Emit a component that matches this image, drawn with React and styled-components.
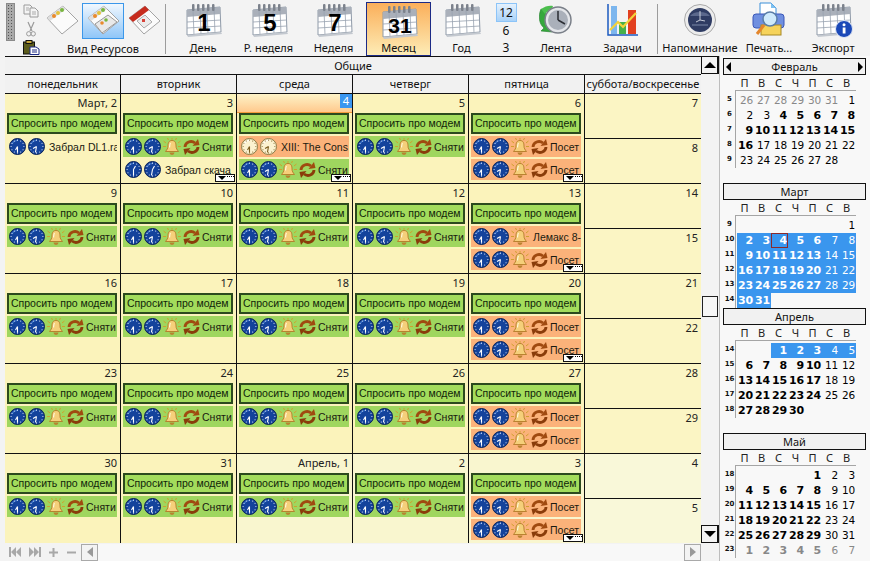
import React from 'react';
import styled, { createGlobalStyle } from 'styled-components';

const FONT = '"Noto Sans", "DejaVu Sans", sans-serif';
const DIGITS = '"DejaVu Sans", Verdana, sans-serif';
const EVENT_FONT = '"Liberation Sans", Arial, sans-serif';

const GlobalStyle = createGlobalStyle`
  html, body { margin: 0; padding: 0; background: #f3f3f3; }
  body { font-family: ${FONT}; color: #111; }
`;

const Page = styled.div`
  width: 870px;
  height: 561px;
  overflow: hidden;
  display: flex;
  flex-direction: column;
  background: #f3f3f3;
`;

/* toolbar */
const Toolbar = styled.div`
  height: 56px;
  display: flex;
  align-items: flex-start;
  padding-left: 6px;
  flex: none;
`;
const Handle = styled.div`
  width: 9px;
  height: 38px;
  margin-top: 3px;
  background: #a9a9a9 radial-gradient(#555 40%, transparent 45%) 0 6px / 3px 3px;
  border: 1px solid #8a8a8a;
  box-sizing: border-box;
`;
const SmallTools = styled.div`
  width: 20px;
  margin: 4px 2px 0 6px;
  display: flex;
  flex-direction: column;
  align-items: center;
  gap: 3px;
`;
const ResourceGroup = styled.div`
  width: 120px;
  height: 56px;
  display: flex;
  flex-direction: column;
  align-items: center;
`;
const ResourceRow = styled.div`
  display: flex;
  align-items: center;
  height: 38px;
  margin-top: 2px;
  gap: 2px;
`;
const ResourceBtn = styled.div`
  width: ${(p) => (p.$active ? 42 : 36)}px;
  height: 36px;
  box-sizing: border-box;
  display: flex;
  align-items: center;
  justify-content: center;
  border: ${(p) => (p.$active ? '1px solid #3b97ea' : 'none')};
  background: ${(p) => (p.$active ? 'linear-gradient(#f0f7fe, #8fc6f8)' : 'none')};
`;
const Label = styled.div`
  font-size: 11px;
  line-height: 15px;
  white-space: nowrap;
  text-align: center;
`;
const GroupLabel = styled(Label)`
  margin-top: 1px;
`;
const Separator = styled.div`
  width: 1px;
  height: 50px;
  margin: 4px ${(p) => p.$right || 4}px 0 ${(p) => p.$left || 2}px;
  background: #9c9c9c;
`;
const ToolBtn = styled.div`
  width: ${(p) => p.$w}px;
  height: ${(p) => (p.$active ? 54 : 56)}px;
  margin-top: ${(p) => (p.$active ? 2 : 0)}px;
  box-sizing: border-box;
  display: flex;
  flex-direction: column;
  align-items: center;
  flex: none;
  border: ${(p) => (p.$active ? '1px solid #1c2a86' : 'none')};
  background: ${(p) => (p.$active ? 'linear-gradient(#fbaf5a, #fdecb6)' : 'none')};
`;
const ToolIcon = styled.div`
  height: ${(p) => (p.$active ? 37 : 40)}px;
  display: flex;
  align-items: center;
  justify-content: center;
`;
const Scale = styled.div`
  width: 28px;
  flex: none;
  display: flex;
  flex-direction: column;
  align-items: center;
  font-size: 12px;
`;
const ScaleTop = styled.div`
  width: 21px;
  height: 19px;
  margin-top: 3px;
  display: flex;
  align-items: center;
  justify-content: center;
  border: 1px solid #8cc4f8;
  background: linear-gradient(#e4f1fd, #a9d2f8);
  box-sizing: border-box;
`;
const ScaleNum = styled.div`
  line-height: 17px;
`;

/* main area */
const Body = styled.div`
  flex: 1;
  min-height: 0;
  display: flex;
`;
const LeftArea = styled.div`
  width: 720px;
  flex: none;
  padding-left: 5px;
  box-sizing: border-box;
  border-right: 1px solid #bdbdbd;
  display: flex;
  flex-direction: column;
`;
const CalendarRow = styled.div`
  display: flex;
  height: 487px;
`;
const Calendar = styled.div`
  width: 696px;
  flex: none;
  display: flex;
  flex-direction: column;
  border-top: 1px solid #111;
  box-sizing: border-box;
`;
const ResourceHead = styled.div`
  height: 18px;
  font-size: 11px;
  line-height: 17px;
  text-align: center;
  border-bottom: 1px solid #111;
  box-sizing: border-box;
  background: #f1f1f1;
`;
const Heads = styled.div`
  display: grid;
  grid-template-columns: repeat(6, 116px);
  height: 19px;
  border-bottom: 1px solid #111;
  box-sizing: border-box;
  background: #f1f1f1;
`;
const Head = styled.div`
  font-size: 11px;
  line-height: 18px;
  text-align: center;
  white-space: nowrap;
  border-right: ${(p) => (p.$last ? 'none' : '1px solid #111')};
`;
const WeekRow = styled.div`
  display: grid;
  grid-template-columns: repeat(6, 116px);
  height: 90px;
  flex: none;
  border-bottom: 1px solid #111;
  box-sizing: border-box;
  &:last-child { border-bottom: none; height: 89px; }
`;
const Cell = styled.div`
  position: relative;
  overflow: hidden;
  padding: 0 3px 0 2px;
  border-right: 1px solid #111;
  background: ${(p) => (p.$next ? '#f9f6cf' : '#fbf3bb')};
`;
const DayLabel = styled.div`
  height: 19px;
  margin: 0 -3px 0 -2px;
  padding-right: 3px;
  box-sizing: border-box;
  font-size: 11px;
  line-height: 18px;
  text-align: right;
  color: #222;
  ${(p) => p.$today && `
    padding-right: 0;
    display: flex;
    justify-content: flex-end;
    background: linear-gradient(#fdf3c8, #ffc98d);
    border-bottom: 1px solid #f59b3c;
  `}
`;
const TodayNum = styled.span`
  width: 12px;
  height: 14px;
  line-height: 14px;
  text-align: center;
  color: #fff;
  background: #3a96f0;
`;
const Chip = styled.div`
  height: 21px;
  box-sizing: border-box;
  border: 2px solid #2c4a1e;
  background: #a3dc5c;
  font-family: ${EVENT_FONT};
  font-size: 10.5px;
  line-height: 17px;
  padding-left: 2px;
  white-space: nowrap;
  overflow: hidden;
  color: #10240a;
`;
const EventRow = styled.div`
  height: 21px;
  margin-top: 2px;
  display: flex;
  align-items: center;
  gap: 2px;
  padding-left: 2px;
  font-family: ${EVENT_FONT};
  font-size: 10.5px;
  white-space: nowrap;
  overflow: hidden;
  background: ${(p) => ({ green: '#9fd65f', orange: '#fbb27a', none: 'transparent' }[p.$kind])};
`;
const EventText = styled.span`
  margin-left: ${(p) => (p.$plain ? 2 : 0)}px;
  color: #1a1a10;
`;
const MoreBadge = styled.div`
  position: absolute;
  right: 1px;
  bottom: 1px;
  width: 20px;
  height: 8px;
  box-sizing: border-box;
  border: 1px solid #111;
  background: #fff;
  display: flex;
  align-items: flex-start;
  gap: 1px;
  padding: 1px 0 0 2px;
`;
const MoreArrow = styled.span`
  width: 0;
  height: 0;
  border-left: 4px solid transparent;
  border-right: 4px solid transparent;
  border-top: 4px solid #000;
`;
const MoreDots = styled.span`
  width: 7px;
  height: 1px;
  background: repeating-linear-gradient(90deg, #000 0 1px, transparent 1px 2px);
`;
const WeekendCol = styled.div`
  display: flex;
  flex-direction: column;
`;
const WeekendCell = styled.div`
  flex: 1;
  padding-right: 3px;
  font-size: 11px;
  line-height: 18px;
  text-align: right;
  color: #222;
  background: ${(p) => (p.$next ? '#f9f8d9' : '#fbf5c4')};
  & + & { border-top: 1px solid #111; }
`;

/* vertical + horizontal scrollbars */
const VScroll = styled.div`
  width: 18px;
  display: flex;
  flex-direction: column;
  background: #f3f3f3;
`;
const ScrollEnd = styled.div`
  height: 18px;
  flex: none;
  box-sizing: border-box;
  border: 1px solid #111;
  border-width: 1px 2px 1px 1px;
  display: flex;
  align-items: center;
  justify-content: center;
`;
const Tri = styled.span`
  width: 0;
  height: 0;
  border-left: 6px solid transparent;
  border-right: 6px solid transparent;
  ${(p) => (p.$down ? 'border-top: 6px solid #000;' : 'border-bottom: 6px solid #000;')}
`;
const TrackGap = styled.div`
  flex: ${(p) => p.$grow};
`;
const Thumb = styled.div`
  height: 21px;
  flex: none;
  margin: 0 1px;
  box-sizing: border-box;
  border: 1px solid #222;
  background: #f6f6f6;
`;
const BottomBar = styled.div`
  height: 18px;
  width: 696px;
  display: flex;
  align-items: center;
  color: #a8a8a8;
`;
const NavIcon = styled.div`
  width: ${(p) => p.$w}px;
  flex: none;
  display: flex;
  align-items: center;
  justify-content: center;
`;
const HBtn = styled.div`
  width: 17px;
  height: 17px;
  flex: none;
  box-sizing: border-box;
  border: 1px solid #a9a9a9;
  display: flex;
  align-items: center;
  justify-content: center;
`;
const HTrack = styled.div`
  flex: 1;
  height: 17px;
  background: #f8f8f8;
`;
const HTri = styled.span`
  width: 0;
  height: 0;
  border-top: 5px solid transparent;
  border-bottom: 5px solid transparent;
  ${(p) => (p.$right ? 'border-left: 6px solid #999;' : 'border-right: 6px solid #999;')}
`;

/* sidebar */
const Sidebar = styled.div`
  flex: 1;
  background: #f8f8f8;
  padding: 2px 4px 0 3px;
  overflow: hidden;
`;
const Month = styled.div`
  height: 125px;
`;
const MonthTitle = styled.div`
  height: 17px;
  box-sizing: border-box;
  border: 1px solid #111;
  background: #f1f1f1;
  display: flex;
  align-items: center;
  justify-content: space-between;
  padding: 0 2px;
  font-size: 11px;
`;
const MonthName = styled.span`
  flex: 1;
  text-align: center;
`;
const MTri = styled.span`
  width: 0;
  height: 0;
  border-top: 5px solid transparent;
  border-bottom: 5px solid transparent;
  ${(p) => (p.$right ? 'border-left: 5px solid #000;' : 'border-right: 5px solid #000;')}
`;
const WeekDays = styled.div`
  display: grid;
  grid-template-columns: repeat(7, 17px);
  margin-left: 13px;
  height: 15px;
  font-size: 11px;
  line-height: 15px;
  text-align: center;
  color: #222;
`;
const MiniBody = styled.div`
  display: flex;
`;
const WeekNums = styled.div`
  width: 12px;
  flex: none;
  padding-top: 2px;
  border-right: 1px solid #a5a5a5;
`;
const WeekNum = styled.div`
  height: 15px;
  font-family: ${DIGITS};
  font-size: 7px;
  font-weight: bold;
  line-height: 15px;
  text-align: center;
  padding-left: 1px;
`;
const MiniGrid = styled.div`
  display: grid;
  grid-template-columns: repeat(7, 17px);
  grid-auto-rows: 15px;
  padding-top: 2px;
  padding-left: 1px;
  border-top: 1px solid #a5a5a5;
  width: 119px;
`;
const MiniDay = styled.div`
  box-sizing: border-box;
  font-family: ${DIGITS};
  font-size: ${(p) => (p.$bold ? 11 : 10.5)}px;
  font-weight: ${(p) => (p.$bold ? 'bold' : 'normal')};
  line-height: 15px;
  text-align: right;
  padding-right: 1px;
  letter-spacing: -0.2px;
  color: ${(p) => (p.$sel ? '#fff' : p.$gray ? '#888' : '#000')};
  background: ${(p) => (p.$sel ? '#3a96ee' : 'transparent')};
  ${(p) => p.$today && 'outline: 1px solid #8a2b2b; outline-offset: -1px;'}
`;

/* icons */
const Clock = ({ white, a = 180, b = 210 }) => {
  const hand = (deg, len) => {
    const r = (deg * Math.PI) / 180;
    return [8.5 + Math.sin(r) * len, 8.5 - Math.cos(r) * len];
  };
  const [x1, y1] = hand(a, 6);
  const [x2, y2] = hand(b, 4);
  const face = white ? '#fbf2d0' : '#14439c';
  const rim = white ? '#8b7a45' : '#0a2258';
  const ink = white ? '#7a5b1c' : '#fff';
  const dots = [0, 30, 60, 90, 120, 150, 180, 210, 240, 270, 300, 330];
  return (
    <svg width="17" height="17" viewBox="0 0 17 17" style={{ flex: 'none' }}>
      <circle cx="8.5" cy="8.5" r="8" fill={face} stroke={rim} />
      <path d="M3 6a6.5 6.5 0 0 1 6-3.500" fill="none" stroke={white ? '#fff' : '#3f78d0'} strokeWidth="1.200" />
      {dots.map((d) => {
        const [x, y] = hand(d, 6.4);
        return <circle key={d} cx={x} cy={y} r="0.55" fill={ink} />;
      })}
      <path d={`M8.5 8.5L${x1} ${y1}M8.5 8.5L${x2} ${y2}`} stroke={ink} strokeWidth="1.100" />
    </svg>
  );
};

const Bell = () => (
  <svg width="18" height="18" viewBox="0 0 18 18" style={{ flex: 'none' }}>
    <path d="M9 2.500c-3.500 0-4 3-4 5.500S4 11.500 2.500 13.500h13C14 11.500 13 10.500 13 8S12.500 2.500 9 2.500z" fill="#f5cf7a" stroke="#b27a28" strokeWidth="0.900" />
    <path d="M6.500 14.500h5a2.500 2.500 0 0 1-5 0z" fill="#b9822f" />
    <path d="M0.500 3l2.500 2M17.500 3L15 5M0 8.500h3M15 8.500h3M9 0v1.800M4.500 0l1 2M13.500 0l-1 2" stroke="#cfa02e" strokeWidth="1" />
    <path d="M7.500 5c-.8 1-.8 3-1 4.500" fill="none" stroke="#fff8dc" strokeWidth="1.200" />
  </svg>
);

const Recur = () => (
  <svg width="17" height="16" viewBox="0 0 17 16" style={{ flex: 'none' }}>
    <path d="M2 8a6 5.500 0 0 1 10-4" fill="none" stroke="#a04a10" strokeWidth="2.800" />
    <path d="M9.500 7l7-1L15 0z" fill="#a04a10" />
    <path d="M15 8a6 5.500 0 0 1-10 4" fill="none" stroke="#8a3c0a" strokeWidth="2.800" />
    <path d="M7.500 9l-7 1L2 16z" fill="#8a3c0a" />
  </svg>
);

const CalendarIcon = ({ num, info }) => (
  <svg width="44" height="38" viewBox="0 0 44 38">
    <path d="M6 9L39 6l1 25-34 3z" fill="#fff" stroke="#8f9aa8" />
    <path d="M6 9L39 6l.4 7L6 16z" fill="#aab0ba" />
    <path d="M6 21l34-2M6 27l34-2M12 9l1 25M19 8l1 25M26 7.500l1 25M33 7l1 25" stroke="#98a2b0" strokeWidth="0.800" />
    {[11, 16, 21, 26, 31].map((x) => (
      <rect key={x} x={x} y="3" width="2.500" height="7" rx="1" fill="#7c828c" />
    ))}
    <path d="M6 34l34-3 1 2-34 3z" fill="#c3c8cf" />
    {num && (
      <text x="23" y="30" textAnchor="middle" fontFamily='"Liberation Sans", sans-serif' fontWeight="bold" fontSize={num.length > 1 ? 21 : 24} fill="#000">
        {num}
      </text>
    )}
    {info && (
      <g>
        <circle cx="33" cy="28" r="8.500" fill="#1b49b8" stroke="#dfe6f5" />
        <rect x="31.700" y="26.500" width="2.800" height="6" fill="#fff" />
        <circle cx="33" cy="23.800" r="1.500" fill="#fff" />
      </g>
    )}
  </svg>
);

const SheetIcon = ({ red, blue }) => (
  <svg width="36" height="34" viewBox="0 0 36 34">
    <path d="M3 14L19 2l15 15-16 13z" fill="#fbfbfb" stroke="#a3a3a3" />
    {red ? (
      <>
        <path d="M3 14L19 2l4 4L7 18z" fill="#c62b1d" />
        <path d="M11 17l8-6 7 7-8 6z" fill="#ececec" stroke="#aaa" />
        <rect x="16" y="15" width="3" height="3" fill="#d8433a" />
      </>
    ) : (
      <>
        <path d="M3 14L19 2l3 3L6 17z" fill="#dedede" />
        <circle cx="10" cy="12" r="2" fill="#e98a2c" />
        <circle cx="14" cy="9" r="2" fill="#e2c23c" />
        <circle cx="18" cy="6" r="2" fill="#79b640" />
        {blue && (
          <>
            <path d="M10 20l13-9 9 7-15 11z" fill="#e9e9e9" stroke="#999" />
            <circle cx="17" cy="19" r="1.800" fill="#e98a2c" />
            <circle cx="21" cy="16" r="1.800" fill="#79b640" />
          </>
        )}
      </>
    )}
  </svg>
);

const CopyIcon = () => (
  <svg width="16" height="14" viewBox="0 0 16 14">
    <path d="M1 1h6l2 2v7H1z" fill="#f4f4f4" stroke="#9a9a9a" />
    <path d="M7 4h5l3 3v6H7z" fill="#f4f4f4" stroke="#9a9a9a" />
    <path d="M3 4h3M3 6h3M9 8h4M9 10h4" stroke="#aaa" />
  </svg>
);
const CutIcon = () => (
  <svg width="10" height="16" viewBox="0 0 10 16">
    <path d="M2 1l4 9M8 1L4 10" stroke="#9a9a9a" strokeWidth="1.200" />
    <circle cx="2.800" cy="12.800" r="2.200" fill="none" stroke="#9a9a9a" />
    <circle cx="7.200" cy="12.800" r="2.200" fill="none" stroke="#9a9a9a" />
  </svg>
);
const PasteIcon = () => (
  <svg width="17" height="15" viewBox="0 0 17 15">
    <rect x="0.500" y="2" width="11" height="12" fill="#5c5c1c" stroke="#111" />
    <rect x="3" y="0.500" width="6" height="3" fill="#c7a73b" stroke="#111" />
    <path d="M7 7h6l3 2v5.500H7z" fill="#fff" stroke="#1c2a86" />
    <path d="M9 10h5M9 12h5" stroke="#1c2a86" />
  </svg>
);
const FeedIcon = () => (
  <svg width="34" height="34" viewBox="0 0 34 34">
    <path d="M2 6c-3 7-2 15 3 19l-3 3 11 1-1-11-3 3c-3-3-3-8-2-12z" fill="#35a83c" stroke="#1f7c28" strokeWidth="0.600" />
    <path d="M2 6c4-3 9-4 12-3l-2 6c-3-.5-5 0-6 2z" fill="#4cbf4e" />
    <circle cx="19" cy="17" r="13" fill="#e4e6ea" stroke="#7b8089" strokeWidth="1.500" />
    <circle cx="19" cy="17" r="10" fill="#aab0ba" />
    <path d="M19 17V8M19 17l7 4" stroke="#2a2d33" strokeWidth="1.500" />
  </svg>
);
const TasksIcon = () => (
  <svg width="32" height="34" viewBox="0 0 32 34">
    <path d="M1 1v31h30" fill="none" stroke="#1c5bc0" strokeWidth="1.500" />
    <rect x="4" y="3" width="6" height="28" fill="#7cb6ee" />
    <rect x="12" y="19" width="7" height="12" fill="#46b04a" />
    <rect x="21" y="7" width="8" height="24" fill="#e2401f" />
    <path d="M3 27l8-8 5 5 13-14" fill="none" stroke="#f2d23a" strokeWidth="2.200" />
  </svg>
);
const ReminderIcon = () => (
  <svg width="34" height="34" viewBox="0 0 34 34">
    <circle cx="17" cy="17" r="15.500" fill="#ececec" stroke="#a9a9a9" />
    <circle cx="17" cy="17" r="12" fill="#2f3c63" />
    <path d="M7 13a11 7 0 0 1 20 0z" fill="#5b688c" />
    <path d="M17 17V8M17 17l-4 2M17 17l5 1" stroke="#d5d9e3" strokeWidth="0.900" />
    <path d="M9 22h16" stroke="#8591b0" strokeWidth="0.900" />
  </svg>
);
const PrintIcon = () => (
  <svg width="34" height="36" viewBox="0 0 34 36">
    <path d="M8 1h11l5 5v10H8z" fill="#fff" stroke="#3b8fd8" />
    <path d="M19 1v5h5z" fill="#7cc0f0" />
    <rect x="1" y="12" width="31" height="14" rx="3" fill="#6f8fe0" stroke="#3a57b8" />
    <rect x="9" y="23" width="20" height="10" fill="#f6d35b" stroke="#a78825" />
    <circle cx="18" cy="17" r="7" fill="#cfeafb" stroke="#5a7ea8" strokeWidth="1.500" />
    <path d="M12 23L5 32" stroke="#e4862b" strokeWidth="3" />
  </svg>
);

const DOW = ['понедельник', 'вторник', 'среда', 'четверг', 'пятница', 'суббота/воскресенье'];

const green = { kind: 'green', text: 'Сняти', bell: true, recur: true };
const orange = { kind: 'orange', text: 'Посет', bell: true, recur: true };
const fri = (more) => ({ events: [orange, orange], more });

const WEEKS = [
  {
    days: [
      { label: 'Март, 2', events: [{ kind: 'none', text: 'Забрал DL1.ra' }] },
      { label: '3', events: [green, { kind: 'none', text: 'Забрал скача', b: 30 }], more: true },
      {
        label: '4',
        today: true,
        events: [{ kind: 'orange', text: 'XIII: The Cons', white: true }, green],
        more: true,
      },
      { label: '5', events: [green] },
      { label: '6', ...fri(true) },
    ],
    weekend: ['7', '8'],
  },
  {
    days: [
      { label: '9', events: [green] },
      { label: '10', events: [green] },
      { label: '11', events: [green] },
      { label: '12', events: [green] },
      { label: '13', events: [{ kind: 'orange', text: 'Лемакс 8-', bell: true }, orange], more: true },
    ],
    weekend: ['14', '15'],
  },
  {
    days: [
      { label: '16', events: [green] },
      { label: '17', events: [green] },
      { label: '18', events: [green] },
      { label: '19', events: [green] },
      { label: '20', ...fri(true) },
    ],
    weekend: ['21', '22'],
  },
  {
    days: [
      { label: '23', events: [green] },
      { label: '24', events: [green] },
      { label: '25', events: [green] },
      { label: '26', events: [green] },
      { label: '27', ...fri(false) },
    ],
    weekend: ['28', '29'],
  },
  {
    days: [
      { label: '30', events: [green] },
      { label: '31', events: [green] },
      { label: 'Апрель, 1', next: true, events: [green] },
      { label: '2', next: true, events: [green] },
      { label: '3', next: true, ...fri(true) },
    ],
    weekend: ['4', '5'],
    next: true,
  },
];

// token: number + flags: b bold, g gray, s selected, t today box; "." is an empty cell
const MONTHS = [
  {
    name: 'Февраль',
    arrows: true,
    nums: [5, 6, 7, 8, 9],
    days: '26g 27g 28g 29g 30g 31g 1 2 3 4b 5b 6b 7b 8b 9b 10b 11b 12b 13b 14b 15b 16b 17 18 19 20 21 22 23 24 25 26 27 28',
  },
  {
    name: 'Март',
    nums: [9, 10, 11, 12, 13, 14],
    days: '. . . . . . 1 2bs 3bs 4bst 5bs 6bs 7s 8s 9bs 10bs 11bs 12bs 13bs 14s 15s 16bs 17bs 18bs 19bs 20bs 21s 22s 23bs 24bs 25bs 26bs 27bs 28s 29s 30bs 31bs',
  },
  {
    name: 'Апрель',
    nums: [14, 15, 16, 17, 18],
    days: '. . 1bs 2bs 3bs 4s 5s 6b 7b 8b 9b 10b 11 12 13b 14b 15b 16b 17b 18 19 20b 21b 22b 23b 24b 25 26 27b 28b 29b 30b',
  },
  {
    name: 'Май',
    nums: [18, 19, 20, 21, 22, 23],
    days: '. . . . 1b 2 3 4b 5b 6b 7b 8b 9 10 11b 12b 13b 14b 15b 16 17 18b 19b 20b 21b 22b 23 24 25b 26b 27b 28b 29b 30 31 1bg 2bg 3bg 4bg 5bg 6g 7g',
  },
];

const parseDay = (tok) => {
  const m = tok.match(/^(\d*|\.)([bgst]*)$/);
  const flags = m[2];
  return {
    text: m[1] === '.' ? '' : m[1],
    bold: flags.includes('b'),
    gray: flags.includes('g'),
    sel: flags.includes('s'),
    today: flags.includes('t'),
  };
};

const Event = ({ ev }) => (
  <EventRow $kind={ev.kind}>
    <Clock white={ev.white} a={ev.a} b={ev.b} />
    <Clock white={ev.white} a={ev.a ?? 190} b={ev.b ?? 240} />
    {ev.bell && <Bell />}
    {ev.recur && <Recur />}
    <EventText $plain={!ev.recur}>{ev.text}</EventText>
  </EventRow>
);

const Day = ({ day }) => (
  <Cell $next={day.next}>
    <DayLabel $today={day.today}>
      {day.today ? <TodayNum>{day.label}</TodayNum> : day.label}
    </DayLabel>
    <Chip>Спросить про модем</Chip>
    {day.events.map((ev, i) => (
      <Event key={i} ev={ev} />
    ))}
    {day.more && (
      <MoreBadge>
        <MoreArrow />
        <MoreDots />
      </MoreBadge>
    )}
  </Cell>
);

const MiniMonth = ({ month }) => (
  <Month>
    <MonthTitle>
      {month.arrows && <MTri />}
      <MonthName>{month.name}</MonthName>
      {month.arrows && <MTri $right />}
    </MonthTitle>
    <WeekDays>
      {['П', 'В', 'С', 'Ч', 'П', 'С', 'В'].map((d, i) => (
        <div key={i}>{d}</div>
      ))}
    </WeekDays>
    <MiniBody>
      <WeekNums>
        {month.nums.map((n) => (
          <WeekNum key={n}>{n}</WeekNum>
        ))}
      </WeekNums>
      <MiniGrid>
        {month.days.split(' ').map((tok, i) => {
          const d = parseDay(tok);
          return (
            <MiniDay key={i} $bold={d.bold} $gray={d.gray} $sel={d.sel} $today={d.today}>
              {d.text}
            </MiniDay>
          );
        })}
      </MiniGrid>
    </MiniBody>
  </Month>
);

const Tool = ({ w, label, active, children }) => (
  <ToolBtn $w={w} $active={active}>
    <ToolIcon $active={active}>{children}</ToolIcon>
    <Label>{label}</Label>
  </ToolBtn>
);

const App = () => (
  <Page>
    <GlobalStyle />
    <Toolbar>
      <Handle />
      <SmallTools>
        <CopyIcon />
        <CutIcon />
        <PasteIcon />
      </SmallTools>
      <ResourceGroup>
        <ResourceRow>
          <ResourceBtn>
            <SheetIcon />
          </ResourceBtn>
          <ResourceBtn $active>
            <SheetIcon blue />
          </ResourceBtn>
          <ResourceBtn>
            <SheetIcon red />
          </ResourceBtn>
        </ResourceRow>
        <GroupLabel>Вид Ресурсов</GroupLabel>
      </ResourceGroup>
      <Separator />
      <Tool w={66} label="День"><CalendarIcon num="1" /></Tool>
      <Tool w={65} label="Р. неделя"><CalendarIcon num="5" /></Tool>
      <Tool w={65} label="Неделя"><CalendarIcon num="7" /></Tool>
      <Tool w={65} label="Месяц" active><CalendarIcon num="31" /></Tool>
      <Tool w={61} label="Год"><CalendarIcon /></Tool>
      <Scale>
        <ScaleTop>12</ScaleTop>
        <ScaleNum>6</ScaleNum>
        <ScaleNum>3</ScaleNum>
      </Scale>
      <Tool w={72} label="Лента"><FeedIcon /></Tool>
      <Tool w={61} label="Задачи"><TasksIcon /></Tool>
      <Separator $left={4} $right={4} />
      <Tool w={76} label="Напоминание"><ReminderIcon /></Tool>
      <Tool w={62} label="Печать..."><PrintIcon /></Tool>
      <Tool w={66} label="Экспорт"><CalendarIcon info /></Tool>
    </Toolbar>
    <Body>
      <LeftArea>
        <CalendarRow>
          <Calendar>
            <ResourceHead>Общие</ResourceHead>
            <Heads>
              {DOW.map((d, i) => (
                <Head key={d} $last={i === 5}>{d}</Head>
              ))}
            </Heads>
            {WEEKS.map((week, i) => (
              <WeekRow key={i}>
                {week.days.map((day) => (
                  <Day key={day.label} day={day} />
                ))}
                <WeekendCol>
                  {week.weekend.map((n) => (
                    <WeekendCell key={n} $next={week.next}>{n}</WeekendCell>
                  ))}
                </WeekendCol>
              </WeekRow>
            ))}
          </Calendar>
          <VScroll>
            <ScrollEnd><Tri /></ScrollEnd>
            <TrackGap $grow={223} />
            <Thumb />
            <TrackGap $grow={208} />
            <ScrollEnd><Tri $down /></ScrollEnd>
          </VScroll>
        </CalendarRow>
        <BottomBar>
          <NavIcon $w={20}>
            <svg width="12" height="10" viewBox="0 0 12 10"><path d="M0 0h2v10H0zM7 0v10L2 5zM12 0v10L7 5z" fill="currentColor" /></svg>
          </NavIcon>
          <NavIcon $w={19}>
            <svg width="12" height="10" viewBox="0 0 12 10"><path d="M10 0h2v10h-2zM5 0v10l5-5zM0 0v10l5-5z" fill="currentColor" /></svg>
          </NavIcon>
          <NavIcon $w={18}>
            <svg width="9" height="9" viewBox="0 0 9 9"><path d="M3.500 0h2v3.500H9v2H5.500V9h-2V5.500H0v-2h3.500z" fill="currentColor" /></svg>
          </NavIcon>
          <NavIcon $w={19}>
            <svg width="9" height="9" viewBox="0 0 9 9"><path d="M0 3.500h9v2H0z" fill="currentColor" /></svg>
          </NavIcon>
          <HBtn><HTri /></HBtn>
          <HTrack />
          <HBtn><HTri $right /></HBtn>
        </BottomBar>
      </LeftArea>
      <Sidebar>
        {MONTHS.map((m) => (
          <MiniMonth key={m.name} month={m} />
        ))}
      </Sidebar>
    </Body>
  </Page>
);

export default App;
